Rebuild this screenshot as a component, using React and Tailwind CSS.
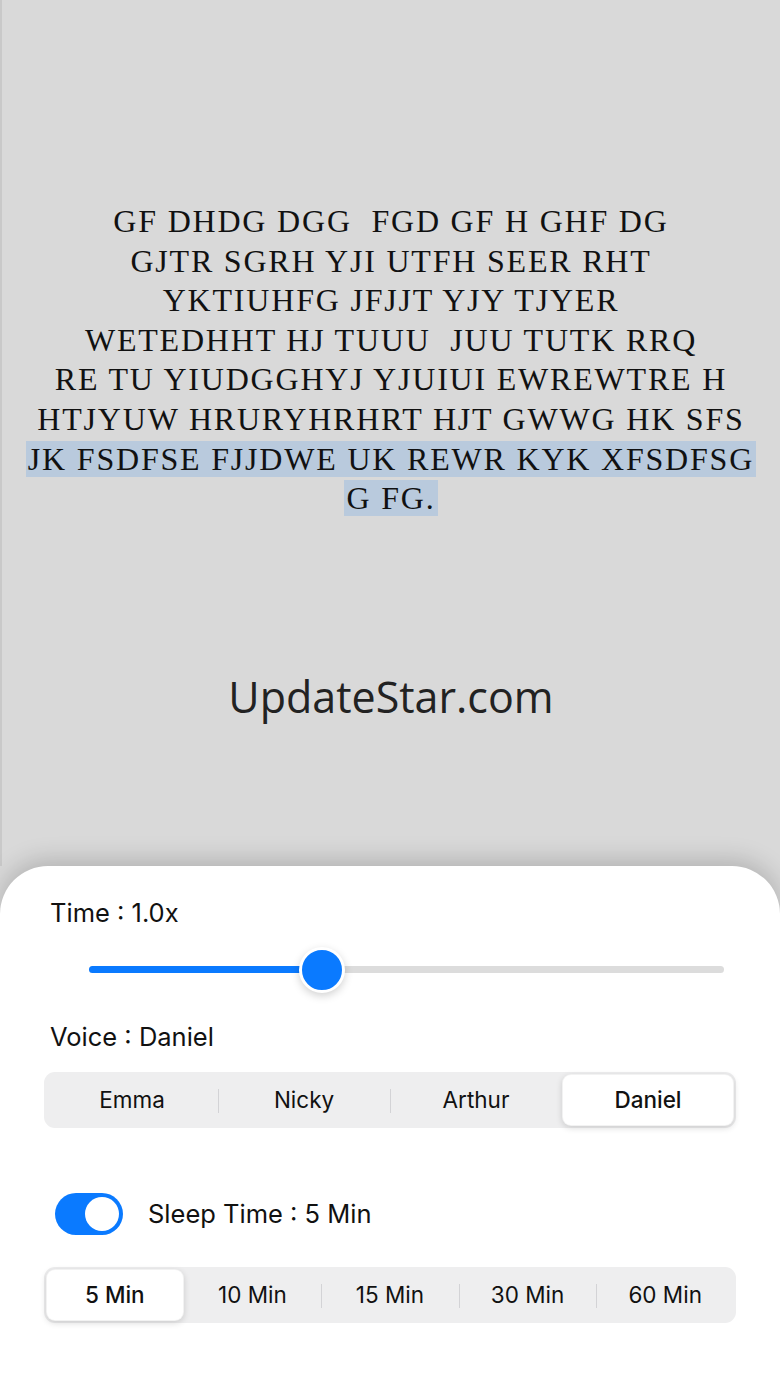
import { useState } from 'react'

const lines = [
  'GF DHDG DGG  FGD GF H GHF DG',
  'GJTR SGRH YJI UTFH SEER RHT',
  'YKTIUHFG JFJJT YJY TJYER',
  'WETEDHHT HJ TUUU  JUU TUTK RRQ',
  'RE TU YIUDGGHYJ YJUIUI EWREWTRE H',
  'HTJYUW HRURYHRHRT HJT GWWG HK SFS',
]

function Segmented({ items, value, onChange }) {
  const idx = items.indexOf(value)
  return (
    <div className="flex h-[56px] items-stretch rounded-[11px] bg-[#eeeeef] p-[2px]">
      {items.map((it, i) => {
        const active = it === value
        const showSep = i > 0 && i !== idx && i !== idx + 1
        return (
          <div key={it} className="relative flex flex-1">
            {showSep && <div className="absolute left-0 top-[15px] h-[24px] w-px bg-[#d3d3d6]" />}
            <button
              onClick={() => onChange(it)}
              className={
                'flex-1 rounded-[9px] text-[22.5px] text-[#111] ' +
                (active ? 'bg-white font-medium shadow-[0_2px_6px_rgba(0,0,0,0.15)] border border-black/5' : '')
              }
            >
              {it}
            </button>
          </div>
        )
      })}
    </div>
  )
}

export default function App() {
  const [voice, setVoice] = useState('Daniel')
  const [sleep, setSleep] = useState('5 Min')
  const [on, setOn] = useState(true)

  return (
    <div className="flex min-h-screen flex-col bg-[#d9d9d9] font-['Inter',sans-serif]">
      {/* reader area */}
      <div className="flex h-[866px] flex-col items-center border-l-2 border-[#c9c9c9]">
        <div className="mt-[202px] whitespace-pre text-center font-['Liberation_Serif',serif] text-[32px] leading-[39.6px] tracking-[1.8px] text-[#111]">
          {lines.map((l) => (
            <div key={l}>{l}</div>
          ))}
          <div>
            <span className="bg-[#b9cadd] px-[2px]">JK FSDFSE FJJDWE UK REWR KYK XFSDFSG</span>
          </div>
          <div>
            <span className="bg-[#b9cadd] px-[2px]">G FG.</span>
          </div>
        </div>
        <div className="mt-[146px] font-['Open_Sans',sans-serif] text-[43px] text-[#222]">UpdateStar.com</div>
      </div>

      {/* settings sheet */}
      <div className="flex flex-1 flex-col rounded-t-[48px] bg-white px-[44px] pt-[31px] shadow-[0_-6px_24px_rgba(0,0,0,0.18)]">
        <div className="pl-[6px] text-[25.5px] leading-[32px] text-[#111]">Time : 1.0x</div>

        <div className="relative ml-[45px] mr-[12px] mt-[18px] h-[44px]">
          <div className="absolute left-0 right-0 top-[19px] h-[7px] rounded-full bg-[#dcdcdc]" />
          <div className="absolute left-0 top-[19px] h-[7px] w-[232px] rounded-full bg-[#0a7aff]" />
          <div className="absolute left-[210px] top-0 h-[46px] w-[46px] rounded-full border-[3px] border-white bg-[#0a7aff] shadow-[0_3px_8px_rgba(0,0,0,0.18)]" />
        </div>

        <div className="mt-[30px] pl-[6px] text-[25.5px] leading-[32px] text-[#111]">Voice : Daniel</div>
        <div className="mt-[19px]">
          <Segmented items={['Emma', 'Nicky', 'Arthur', 'Daniel']} value={voice} onChange={setVoice} />
        </div>

        <div className="mt-[65px] flex h-[42px] items-center gap-[25px] pl-[11px]">
          <button
            onClick={() => setOn((v) => !v)}
            className={'flex h-[42px] w-[68px] items-center rounded-full p-[4px] ' + (on ? 'justify-end bg-[#0a7aff]' : 'justify-start bg-[#e5e5ea]')}
          >
            <span className="h-[34px] w-[34px] rounded-full bg-white" />
          </button>
          <span className="text-[25.5px] leading-[32px] text-[#111]">Sleep Time : 5 Min</span>
        </div>

        <div className="mt-[32px]">
          <Segmented items={['5 Min', '10 Min', '15 Min', '30 Min', '60 Min']} value={sleep} onChange={setSleep} />
        </div>
      </div>
    </div>
  )
}
